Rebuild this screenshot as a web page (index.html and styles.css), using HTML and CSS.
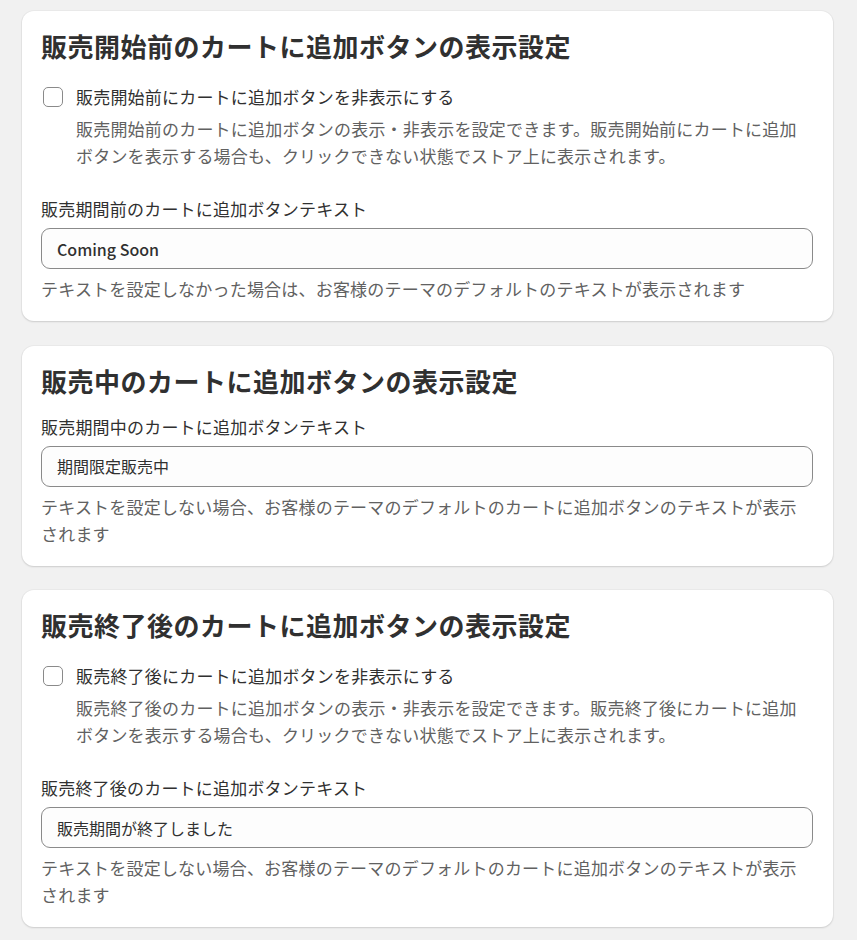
FILE: index.html
```html
<!DOCTYPE html>
<html lang="ja">
<head>
<meta charset="utf-8">
<title>カートに追加ボタンの表示設定</title>
<link rel="stylesheet" href="styles.css">
</head>
<body>
<main class="page">
  <section class="card">
    <h2 class="card-title">販売開始前のカートに追加ボタンの表示設定</h2>
    <div class="check">
      <label class="check-row">
        <span class="box"></span>
        <span class="check-label">販売開始前にカートに追加ボタンを非表示にする</span>
      </label>
      <p class="check-help">販売開始前のカートに追加ボタンの表示・非表示を設定できます。販売開始前にカートに追加ボタンを表示する場合も、クリックできない状態でストア上に表示されます。</p>
    </div>
    <div class="field field-after-check">
      <div class="field-label">販売期間前のカートに追加ボタンテキスト</div>
      <div class="input"><span class="input-text latin">Coming Soon</span></div>
      <p class="field-help">テキストを設定しなかった場合は、お客様のテーマのデフォルトのテキストが表示されます</p>
    </div>
  </section>

  <section class="card">
    <h2 class="card-title">販売中のカートに追加ボタンの表示設定</h2>
    <div class="field field-after-title">
      <div class="field-label">販売期間中のカートに追加ボタンテキスト</div>
      <div class="input"><span class="input-text">期間限定販売中</span></div>
      <p class="field-help">テキストを設定しない場合、お客様のテーマのデフォルトのカートに追加ボタンのテキストが表示されます</p>
    </div>
  </section>

  <section class="card">
    <h2 class="card-title">販売終了後のカートに追加ボタンの表示設定</h2>
    <div class="check">
      <label class="check-row">
        <span class="box"></span>
        <span class="check-label">販売終了後にカートに追加ボタンを非表示にする</span>
      </label>
      <p class="check-help">販売終了後のカートに追加ボタンの表示・非表示を設定できます。販売終了後にカートに追加ボタンを表示する場合も、クリックできない状態でストア上に表示されます。</p>
    </div>
    <div class="field field-after-check">
      <div class="field-label">販売終了後のカートに追加ボタンテキスト</div>
      <div class="input"><span class="input-text">販売期間が終了しました</span></div>
      <p class="field-help">テキストを設定しない場合、お客様のテーマのデフォルトのカートに追加ボタンのテキストが表示されます</p>
    </div>
  </section>
</main>
</body>
</html>
```

FILE: styles.css
```css
html, body {
  margin: 0;
  padding: 0;
  background: #f1f1f1;
}

body {
  font-family: "Noto Sans CJK JP", "Noto Sans", sans-serif;
  color: #303030;
}

.page {
  display: flex;
  flex-direction: column;
  gap: 24.5px;
  padding: 11px 24px 14px 22px;
}

.card {
  background: #ffffff;
  border-radius: 12px;
  padding: 20px 20px 19px 19px;
  box-shadow: 0 1px 2px rgba(26, 26, 26, 0.14), 0 0 0 1px rgba(26, 26, 26, 0.03);
}

.card-title {
  margin: 0;
  font-size: 26px;
  line-height: 30px;
  font-weight: 700;
  color: #303030;
  letter-spacing: 0.5px;
}

.check {
  margin-top: 22px;
}

.check-row {
  display: flex;
  align-items: center;
  gap: 13px;
  height: 27px;
  padding-left: 2px;
}

.box {
  flex: none;
  width: 18px;
  height: 18px;
  border: 1px solid #8a8a8a;
  border-radius: 5px;
  background: #fff;
}

.check-label {
  font-size: 17px;
  line-height: 27px;
  color: #303030;
  letter-spacing: 0.2px;
}

.check-help {
  margin: 5px 0 0 35px;
  font-size: 17px;
  line-height: 27px;
  color: #616161;
  letter-spacing: 0.2px;
}

.field-after-check {
  margin-top: 28px;
}

.field-after-title {
  margin-top: 19px;
}

.field-label {
  font-size: 17px;
  line-height: 24px;
  color: #303030;
  letter-spacing: 0.2px;
  margin-bottom: 7px;
}

.input {
  height: 41px;
  box-sizing: border-box;
  border: 1px solid #8a8a8a;
  border-radius: 9px;
  background: #fdfdfd;
  display: flex;
  align-items: center;
  padding: 0 15px;
}

.input-text {
  font-size: 16px;
  color: #303030;
}

.input-text.latin {
  font-weight: 500;
}

.field-help {
  margin: 6px 0 0;
  font-size: 17px;
  line-height: 27px;
  color: #616161;
  letter-spacing: 0.2px;
}
```
